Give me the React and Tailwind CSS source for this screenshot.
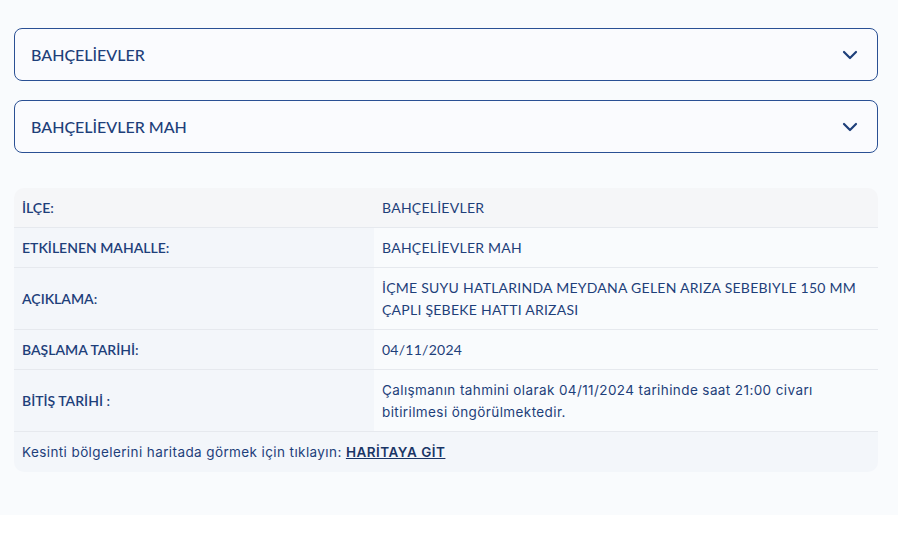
import React from "react";

const rows = [
  { label: "İLÇE:", value: "BAHÇELİEVLER" },
  { label: "ETKİLENEN MAHALLE:", value: "BAHÇELİEVLER MAH" },
  {
    label: "AÇIKLAMA:",
    value: "İÇME SUYU HATLARINDA MEYDANA GELEN ARIZA SEBEBIYLE 150 MM ÇAPLI ŞEBEKE HATTI ARIZASI",
  },
  { label: "BAŞLAMA TARİHİ:", value: "04/11/2024" },
  {
    label: "BİTİŞ TARİHİ :",
    value: "Çalışmanın tahmini olarak 04/11/2024 tarihinde saat 21:00 civarı bitirilmesi öngörülmektedir.",
    mixed: true,
  },
];

const Chevron = () => (
  <svg width="16" height="10" viewBox="0 0 16 10" fill="none">
    <path d="M2 2l6 6 6-6" stroke="#1e3f7a" strokeWidth="2.2" strokeLinecap="round" strokeLinejoin="round" />
  </svg>
);

const SelectBox = ({ text }) => (
  <div className="flex items-center justify-between h-[53px] border border-[#2a5094] rounded-lg pl-[16px] pr-[19px] bg-[#fafbfe]">
    <span className="text-[16px] font-medium text-[#1e3f7a]">{text}</span>
    <Chevron />
  </div>
);

export default function App() {
  return (
    <div className="bg-white min-h-[547px]" style={{ fontFamily: "Lato, 'Open Sans', sans-serif" }}>
      <div className="w-[898px] h-[515px] bg-[#f9fbfd] pt-[28px] px-[14px]">
        <div className="w-[864px] flex flex-col gap-[19px]">
          <SelectBox text="BAHÇELİEVLER" />
          <SelectBox text="BAHÇELİEVLER MAH" />
        </div>

        <div className="w-[864px] mt-[35px] rounded-[10px] overflow-hidden text-[14px] leading-[22px] text-[#1e3f7a]">
          {rows.map((r, i) => (
            <div
              key={r.label}
              className={`grid grid-cols-[360px_1fr] border-b border-[#e6e9ee] ${i === 0 ? "bg-[#f5f6f8]" : "bg-[#f9fbfd]"}`}
            >
              <div className={`flex items-center px-2 py-[8.5px] font-semibold ${i === 0 ? "" : "bg-[#f3f6fa]"}`}>
                {r.label}
              </div>
              <div
                className={`px-2 py-[8.5px] pr-4 ${r.mixed ? "text-[13.5px] tracking-[0.4px]" : "tracking-[0.25px]"}`}
                style={r.mixed ? { fontFamily: "Inter, sans-serif" } : undefined}
              >
                {r.value}
              </div>
            </div>
          ))}
          <div className="bg-[#f3f6fa] px-2 py-[9px] text-[13.5px] tracking-[0.4px]" style={{ fontFamily: "Inter, sans-serif" }}>
            Kesinti bölgelerini haritada görmek için tıklayın:{" "}
            <a href="#" className="font-semibold underline text-[#1a3566] tracking-[0.5px]">HARİTAYA GİT</a>
          </div>
        </div>
      </div>
    </div>
  );
}
